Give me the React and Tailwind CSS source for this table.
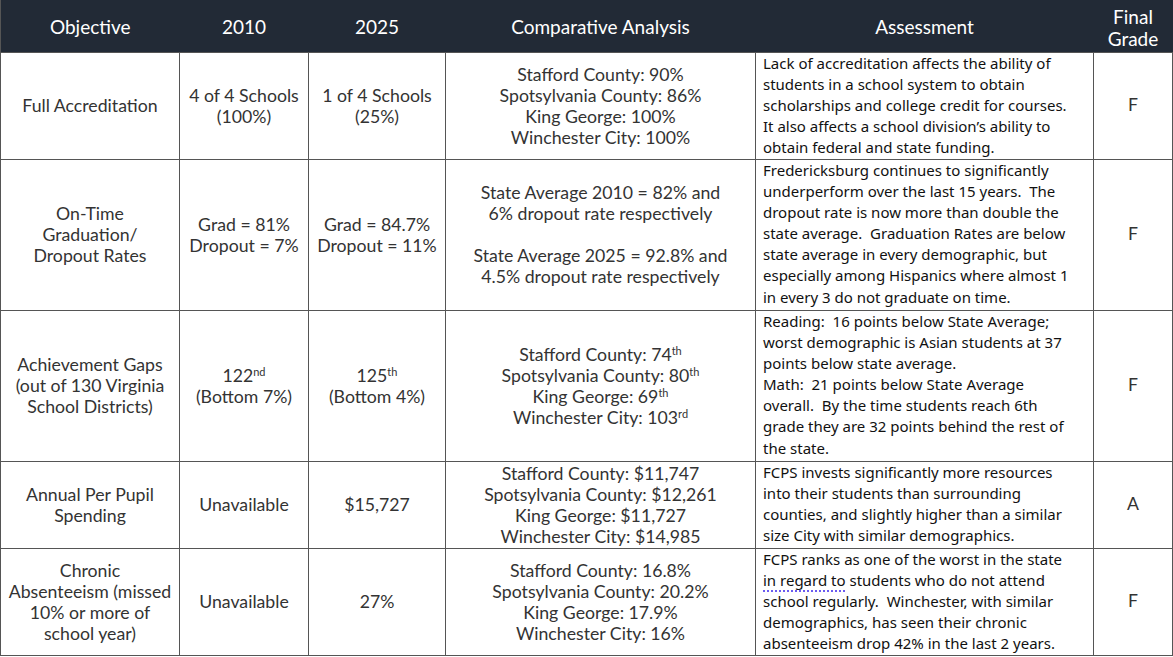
import React from 'react';

const cols = ['w-[179px]', 'w-[129px]', 'w-[137px]', 'w-[310px]', 'w-[338px]', 'w-[79px]'];

const Sup = ({ children }) => <sup className="text-[11px] leading-none">{children}</sup>;

const rows = [
  {
    h: 'h-[107px]',
    objective: ['Full Accreditation'],
    y2010: ['4 of 4 Schools', '(100%)'],
    y2025: ['1 of 4 Schools', '(25%)'],
    analysis: ['Stafford County: 90%', 'Spotsylvania County: 86%', 'King George: 100%', 'Winchester City: 100%'],
    assessment: [
      'Lack of accreditation affects the ability of',
      'students in a school system to obtain',
      'scholarships and college credit for courses.',
      'It also affects a school division\u2019s ability to',
      'obtain federal and state funding.',
    ],
    grade: 'F',
  },
  {
    h: 'h-[151px]',
    objective: ['On-Time', 'Graduation/', 'Dropout Rates'],
    y2010: ['Grad = 81%', 'Dropout = 7%'],
    y2025: ['Grad = 84.7%', 'Dropout = 11%'],
    analysis: [
      'State Average 2010 = 82% and',
      '6% dropout rate respectively',
      '',
      'State Average 2025 = 92.8% and',
      '4.5% dropout rate respectively',
    ],
    assessment: [
      'Fredericksburg continues to significantly',
      'underperform over the last 15 years.  The',
      'dropout rate is now more than double the',
      'state average.  Graduation Rates are below',
      'state average in every demographic, but',
      'especially among Hispanics where almost 1',
      'in every 3 do not graduate on time.',
    ],
    grade: 'F',
  },
  {
    h: 'h-[151px]',
    objective: ['Achievement Gaps', '(out of 130 Virginia', 'School Districts)'],
    y2010: [<>122<Sup>nd</Sup></>, '(Bottom 7%)'],
    y2025: [<>125<Sup>th</Sup></>, '(Bottom 4%)'],
    analysis: [
      <>Stafford County: 74<Sup>th</Sup></>,
      <>Spotsylvania County: 80<Sup>th</Sup></>,
      <>King George: 69<Sup>th</Sup></>,
      <>Winchester City: 103<Sup>rd</Sup></>,
    ],
    assessment: [
      'Reading:  16 points below State Average;',
      'worst demographic is Asian students at 37',
      'points below state average.',
      'Math:  21 points below State Average',
      'overall.  By the time students reach 6th',
      'grade they are 32 points behind the rest of',
      'the state.',
    ],
    grade: 'F',
  },
  {
    h: 'h-[87px]',
    objective: ['Annual Per Pupil', 'Spending'],
    y2010: ['Unavailable'],
    y2025: ['$15,727'],
    analysis: ['Stafford County: $11,747', 'Spotsylvania County: $12,261', 'King George: $11,727', 'Winchester City: $14,985'],
    assessment: [
      'FCPS invests significantly more resources',
      'into their students than surrounding',
      'counties, and slightly higher than a similar',
      'size City with similar demographics.',
    ],
    grade: 'A',
  },
  {
    h: 'h-[107px]',
    objective: ['Chronic', 'Absenteeism (missed', '10% or more of', 'school year)'],
    y2010: ['Unavailable'],
    y2025: ['27%'],
    analysis: ['Stafford County: 16.8%', 'Spotsylvania County: 20.2%', 'King George: 17.9%', 'Winchester City: 16%'],
    assessment: [
      'FCPS ranks as one of the worst in the state',
      <>
        <span className="underline decoration-dotted decoration-[#6b5cf0] decoration-[1.5px] underline-offset-[5px]">in regard to</span> students who do not attend
      </>,
      'school regularly.  Winchester, with similar',
      'demographics, has seen their chronic',
      'absenteeism drop 42% in the last 2 years.',
    ],
    grade: 'F',
  },
];

const Lines = ({ lines }) => (
  <div className="flex flex-col items-center">
    {lines.map((l, i) => (
      <span key={i} className="whitespace-nowrap h-[21px] leading-[21px]">{l}</span>
    ))}
  </div>
);

export default function App() {
  return (
    <div className="w-[1173px] h-[657px] bg-white font-['Lato',sans-serif] text-[#333]">
      <table className="border-collapse table-fixed w-[1172px]">
        <thead>
          <tr className="h-[52px] bg-[#222a36] text-white text-[19px]">
            <th className={`${cols[0]} font-normal pt-[3px] border-l border-[#555]`}>Objective</th>
            <th className={`${cols[1]} font-normal pt-[3px]`}>2010</th>
            <th className={`${cols[2]} font-normal pt-[3px]`}>2025</th>
            <th className={`${cols[3]} font-normal pt-[3px]`}>Comparative Analysis</th>
            <th className={`${cols[4]} font-normal pt-[3px]`}>Assessment</th>
            <th className={`${cols[5]} font-normal leading-[22px] pt-[4px]`}>Final<br />Grade</th>
          </tr>
        </thead>
        <tbody className="text-[17.7px]">
          {rows.map((r, i) => (
            <tr key={i} className={r.h}>
              <td className="border border-[#555] align-middle p-0"><Lines lines={r.objective} /></td>
              <td className="border border-[#555] align-middle p-0"><Lines lines={r.y2010} /></td>
              <td className="border border-[#555] align-middle p-0"><Lines lines={r.y2025} /></td>
              <td className="border border-[#555] align-middle p-0"><Lines lines={r.analysis} /></td>
              <td className="border border-[#555] align-top p-0 pl-[7px] text-[15px] text-[#111] font-['Noto_Sans',sans-serif]">
                <div className="flex flex-col">
                  {r.assessment.map((l, j) => (
                    <span key={j} className="whitespace-pre h-[21.2px] leading-[21.2px]">{l}</span>
                  ))}
                </div>
              </td>
              <td className="border border-[#555] align-middle text-center p-0">{r.grade}</td>
            </tr>
          ))}
        </tbody>
      </table>
    </div>
  );
}
